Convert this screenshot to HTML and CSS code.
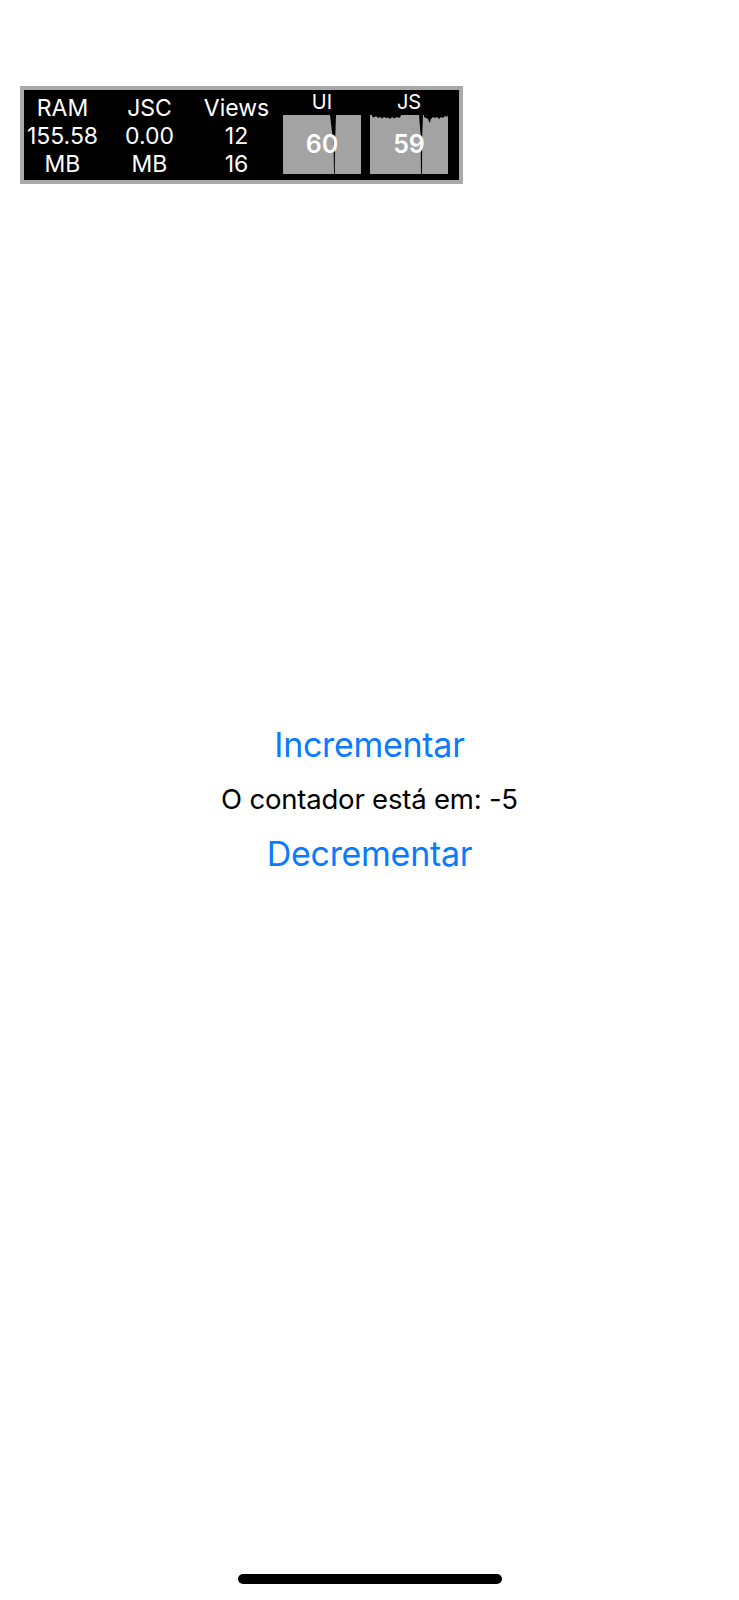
FILE: index.html
```html
<!DOCTYPE html>
<html lang="pt">
<head>
<meta charset="utf-8">
<title>Contador</title>
<link rel="stylesheet" href="styles.css">
</head>
<body>
<div class="screen">
  <main class="content">
    <div class="btn btn-inc">Incrementar</div>
    <div class="counter">O contador está em: -5</div>
    <div class="btn btn-dec">Decrementar</div>
  </main>

  <div class="perf">
    <div class="stat"><span>RAM</span><span>155.58</span><span>MB</span></div>
    <div class="stat"><span>JSC</span><span>0.00</span><span>MB</span></div>
    <div class="stat"><span>Views</span><span>12</span><span>16</span></div>
    <div class="fps fps-ui">
      <div class="fps-label">UI</div>
      <div class="graph">
        <svg class="graph-svg" viewBox="0 0 78 59" width="78" height="59">
          <rect x="0" y="0" width="78" height="59" fill="#a3a3a3"/>
          <polygon points="47,0 53,0 52,30 51.8,59 51,59 50.6,30" fill="#000"/>
        </svg>
        <span class="fps-val">60</span>
      </div>
    </div>
    <div class="fps fps-js">
      <div class="fps-label">JS</div>
      <div class="graph">
        <svg class="graph-svg" viewBox="0 0 78 59" width="78" height="59">
          <rect x="0" y="0" width="78" height="59" fill="#a3a3a3"/>
          <polygon points="2,0 2,1.5 4,2.5 6,1 8,3 10,2 12,3.5 14,2 16,3 18,2.5 20,4 22,2 24,3.5 27,2 29,3 31,1 31,0" fill="#000"/>
          <polygon points="49,0 53,0 52.2,20 52,59 51,59 50.6,20" fill="#000"/>
          <polygon points="54,0 54,2 56,3 58,4 59.5,8 61,4 63,2 65,3 67,2 69,4 71,2 73,3 75,1 77,2 78,0" fill="#000"/>
        </svg>
        <span class="fps-val">59</span>
      </div>
    </div>
  </div>

  <div class="home-indicator"></div>
</div>
</body>
</html>
```

FILE: styles.css
```css
html, body {
  margin: 0;
  padding: 0;
  background: #ffffff;
}

.screen {
  position: relative;
  width: 739px;
  height: 1600px;
  overflow: hidden;
  font-family: Inter, "Liberation Sans", sans-serif;
}

.content {
  height: 1600px;
  display: flex;
  flex-direction: column;
  align-items: center;
  justify-content: center;
}

.btn {
  color: #0a7aff;
  font-size: 34px;
  letter-spacing: -0.3px;
}

.btn-inc {
  line-height: 56.7px;
}

.counter {
  color: #000;
  font-size: 27.5px;
  line-height: 50px;
  letter-spacing: -0.2px;
}

.btn-dec {
  line-height: 59.3px;
}

.perf {
  position: absolute;
  left: 20px;
  top: 86px;
  width: 443px;
  height: 98px;
  box-sizing: border-box;
  border: 4px solid #a8a8a8;
  background: #000;
  color: #fff;
  display: flex;
}

.stat {
  width: 77px;
  margin-right: 10px;
  padding-top: 4px;
  display: flex;
  flex-direction: column;
  align-items: center;
  font-size: 23px;
  line-height: 28px;
  white-space: nowrap;
}

.stat:nth-child(3) {
  margin-right: 8px;
}

.fps {
  width: 78px;
  display: flex;
  flex-direction: column;
  align-items: center;
}

.fps-ui {
  margin-right: 9px;
}

.fps-label {
  font-size: 20px;
  line-height: 24.7px;
}

.graph {
  position: relative;
  width: 78px;
  height: 59px;
}

.graph-svg {
  display: block;
}

.fps-val {
  position: absolute;
  left: 0;
  right: 0;
  top: 0;
  bottom: 0;
  display: flex;
  align-items: center;
  justify-content: center;
  font-size: 25px;
  font-weight: 600;
  color: #fff;
}

.home-indicator {
  position: absolute;
  left: 238px;
  top: 1574px;
  width: 264px;
  height: 10px;
  border-radius: 5px;
  background: #000;
}
```
